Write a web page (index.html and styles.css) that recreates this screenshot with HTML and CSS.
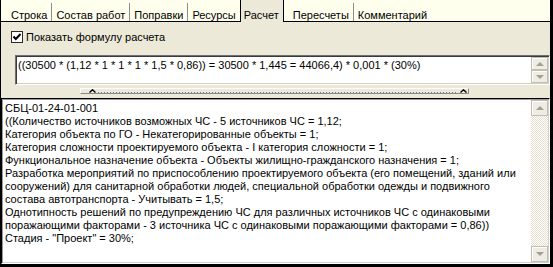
FILE: index.html
```html
<!DOCTYPE html>
<html lang="ru">
<head>
<meta charset="utf-8">
<title>Расчет</title>
<link rel="stylesheet" href="styles.css">
</head>
<body>
<div class="window">
  <div class="tabs">
    <span class="tab">Строка</span><span class="sep"></span>
    <span class="tab">Состав работ</span><span class="sep"></span>
    <span class="tab">Поправки</span><span class="sep"></span>
    <span class="tab">Ресурсы</span>
    <span class="tab active">Расчет</span>
    <span class="tab next">Пересчеты</span><span class="sep"></span>
    <span class="tab">Комментарий</span>
  </div>
  <div class="panel">
    <label class="check">
      <svg class="box" width="12" height="12" viewBox="0 0 12 12"><rect x="0.5" y="0.5" width="11" height="11" fill="#fff" stroke="#2a2a2a"/><polyline points="2.5,5.5 4.8,8 9.5,3" fill="none" stroke="#000" stroke-width="2"/></svg>
      <span>Показать формулу расчета</span>
    </label>
    <div class="formula sunken">
      <div class="text">((30500 * (1,12 * 1 * 1 * 1 * 1,5 * 0,86)) = 30500 * 1,445 = 44066,4) * 0,001 * (30%)</div>
      <div class="vscroll">
        <div class="sbtn"><span class="arrow up"></span></div>
        <div class="sbtn"><span class="arrow down"></span></div>
      </div>
    </div>
    <div class="splitter">
      <svg class="caret" width="7" height="4" viewBox="0 0 7 4"><polyline points="0.5,3.5 3.5,0.8 6.5,3.5" fill="none" stroke="#000" stroke-width="1.4"/></svg>
      <span class="dots"></span>
      <svg class="caret" width="7" height="4" viewBox="0 0 7 4"><polyline points="0.5,3.5 3.5,0.8 6.5,3.5" fill="none" stroke="#000" stroke-width="1.4"/></svg>
    </div>
    <div class="memo sunken">
      <div class="text">СБЦ-01-24-01-001
((Количество источников возможных ЧС - 5 источников ЧС = 1,12;
Категория объекта по ГО - Некатегорированные объекты = 1;
Категория сложности проектируемого объекта - I категория сложности = 1;
Функциональное назначение объекта - Объекты жилищно-гражданского назначения = 1;
Разработка мероприятий по приспособлению проектируемого объекта (его помещений, зданий или
сооружений) для санитарной обработки людей, специальной обработки одежды и подвижного
состава автотранспорта - Учитывать = 1,5;
Однотипность решений по предупреждению ЧС для различных источников ЧС с одинаковыми
поражающими факторами - 3 источника ЧС с одинаковыми поражающими факторами = 0,86))
Стадия - "Проект" = 30%;</div>
      <div class="vscroll">
        <div class="sbtn fixed"><span class="arrow up"></span></div>
        <div class="track"></div>
        <div class="sbtn fixed"><span class="arrow down"></span></div>
      </div>
    </div>
  </div>
</div>
</body>
</html>
```
FILE: styles.css
```css
* { box-sizing: border-box; }

html, body {
  margin: 0;
  background: #000;
}

body {
  font-family: "Liberation Sans", Arial, sans-serif;
  font-size: 11px;
  color: #000;
}

.window {
  width: 553px;
  height: 267px;
  border-left: 1px solid #000;
  border-right: 3px solid #000;
  border-bottom: 3px solid #000;
  background: #ECE9D8;
  display: flex;
  flex-direction: column;
  overflow: hidden;
}

.tabs {
  flex: none;
  height: 22px;
  display: flex;
  background: #FFFFEE;
  border-bottom: 1px solid #000;
  padding-left: 6px;
}

.tab {
  padding: 9px 4px 0;
  line-height: 12px;
  white-space: nowrap;
}

.tab.active {
  background: #ECE9D8;
  border-left: 1px solid #000;
  border-right: 1px solid #000;
  margin-bottom: -1px;
  padding-left: 3px;
  padding-right: 4px;
}

.tab.next { padding-left: 9px; }

.sep {
  width: 1px;
  height: 18px;
  margin-top: 3px;
  background: #8E8E8E;
}

.panel {
  flex: 1;
  display: flex;
  flex-direction: column;
  min-height: 0;
}

.check {
  display: flex;
  align-items: center;
  gap: 3px;
  height: 12px;
  line-height: 12px;
  margin: 9px 0 0 10px;
}

.check .box { flex: none; }

.sunken {
  background: #fff;
  border: 1px solid;
  border-color: #6F6F6F #fff #fff #6F6F6F;
  padding: 1px;
  box-shadow: inset 1px 1px 0 #3A3A3A, inset -1px -1px 0 #D4D0C8;
  display: flex;
}

.sunken .text {
  flex: 1;
  min-width: 0;
  white-space: pre;
  overflow: hidden;
  line-height: 13px;
  padding: 2px 0 0 1px;
}

.formula {
  flex: none;
  height: 30px;
  margin: 12px 0 0 14px;
}

.memo {
  flex: 1;
  margin-top: 4px;
  min-height: 0;
  border-color: #000 #fff #fff #000;
  box-shadow: inset 1px 1px 0 #9A9A9A, inset -1px -1px 0 #D4D0C8;
}

.memo .text { padding-left: 2px; }

.vscroll {
  flex: none;
  width: 17px;
  display: flex;
  flex-direction: column;
}

.sbtn {
  flex: 1;
  background: #EEEDE5;
  border: 1px solid #C2BFAE;
  box-shadow: inset 1px 1px 0 #fff;
  display: flex;
  align-items: center;
  justify-content: center;
}

.sbtn.fixed {
  flex: none;
  height: 16px;
}

.track {
  flex: 1;
  background-image: repeating-conic-gradient(#E3E0D0 0 25%, #fff 0 50%);
  background-size: 2px 2px;
}

.arrow {
  width: 0;
  height: 0;
  border-left: 4px solid transparent;
  border-right: 4px solid transparent;
}

.arrow.up { border-bottom: 4px solid #A4A08C; }
.arrow.down { border-top: 4px solid #A4A08C; }

.splitter {
  flex: none;
  width: 389px;
  height: 6px;
  margin: 3px 0 0 79px;
  border: 1px solid;
  border-color: #fff #8A8A8A #8A8A8A #fff;
  display: flex;
  align-items: center;
  padding: 0 1px 0 8px;
  gap: 2px;
}

.caret { flex: none; display: block; }

.dots {
  flex: 1;
  height: 1px;
  margin-top: 2px;
  background-image: repeating-linear-gradient(to right, #5A78B4 0 1px, transparent 1px 3px);
}
```
